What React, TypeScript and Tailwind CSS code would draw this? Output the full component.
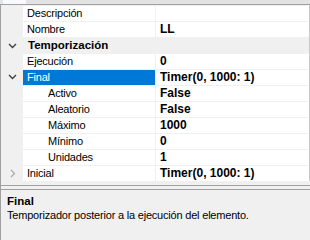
import React from "react";

type Row =
  | { kind: "cat"; name: string; open: boolean }
  | { kind: "prop"; name: string; value: string; indent?: boolean; expander?: "open" | "closed"; selected?: boolean };

const rows: Row[] = [
  { kind: "prop", name: "Descripción", value: "" },
  { kind: "prop", name: "Nombre", value: "LL" },
  { kind: "cat", name: "Temporización", open: true },
  { kind: "prop", name: "Ejecución", value: "0" },
  { kind: "prop", name: "Final", value: "Timer(0, 1000: 1)", expander: "open", selected: true },
  { kind: "prop", name: "Activo", value: "False", indent: true },
  { kind: "prop", name: "Aleatorio", value: "False", indent: true },
  { kind: "prop", name: "Máximo", value: "1000", indent: true },
  { kind: "prop", name: "Mínimo", value: "0", indent: true },
  { kind: "prop", name: "Unidades", value: "1", indent: true },
  { kind: "prop", name: "Inicial", value: "Timer(0, 1000: 1)", expander: "closed" },
];

function ChevronDown() {
  return (
    <svg width="9" height="6" viewBox="0 0 9 6" className="block">
      <path d="M1 1 L4.5 4.5 L8 1" fill="none" stroke="#404040" strokeWidth="1.4" />
    </svg>
  );
}

function ChevronRight() {
  return (
    <svg width="6" height="9" viewBox="0 0 6 9" className="block">
      <path d="M1 1 L4.5 4.5 L1 8" fill="none" stroke="#a8a8a8" strokeWidth="1.2" />
    </svg>
  );
}

export default function App() {
  return (
    <div
      className="w-[310px] h-[240px] bg-[#f0f0f0] flex flex-col overflow-hidden text-[11px] tracking-[-0.2px] text-black"
      style={{ fontFamily: '"Liberation Sans", Arial, sans-serif' }}
    >
      {/* tab strip */}
      <div className="h-[4px] flex bg-[#e3e3e3]">
        <div className="w-[3px]" />
        <div className="w-[23px] bg-[#f7f9fc]" />
      </div>
      <div className="h-[1px] bg-[#a0a0a0]" />

      {/* grid */}
      <div className="flex flex-col border-l border-[#a0a0a0] border-r border-r-[#c8c8c8] bg-white">
        {rows.map((r, i) => {
          if (r.kind === "cat") {
            return (
              <div key={i} className="h-[16px] flex bg-[#f0f0f0] border-t border-[#f0f0f0]">
                <div className="w-[22px] flex items-center justify-center pl-[1px]">
                  <ChevronDown />
                </div>
                <div className="pl-[5px] font-bold text-[11.5px] tracking-normal leading-[15px]">{r.name}</div>
              </div>
            );
          }
          return (
            <div key={i} className="h-[16px] flex">
              <div className="w-[22px] bg-[#f0f0f0] flex items-center justify-center pl-[1px]">
                {r.expander === "open" && <ChevronDown />}
                {r.expander === "closed" && <ChevronRight />}
              </div>
              <div className="flex-1 flex border-t border-[#f0f0f0] mr-[1px]">
                <div
                  className={
                    "w-[132px] leading-[15px] whitespace-nowrap " +
                    (r.indent ? "pl-[25px] " : "pl-[4px] ") +
                    (r.selected ? "bg-[#0078d7] text-white" : "")
                  }
                >
                  {r.name}
                </div>
                <div className="w-[1px] bg-[#f0f0f0]" />
                <div className="flex-1 pl-[4px] font-bold text-[12px] tracking-normal leading-[15px] whitespace-nowrap">
                  {r.value}
                </div>
              </div>
            </div>
          );
        })}
      </div>

      <div className="h-[4px] border-l border-[#a0a0a0]" />
      <div className="h-[1px] bg-[#a0a0a0]" />
      <div className="h-[3px] border-l border-[#a0a0a0]" />
      <div className="h-[1px] bg-[#a0a0a0]" />

      {/* help pane */}
      <div className="flex-1 border-l border-[#a0a0a0] pl-[6px] pt-[4px]">
        <div className="font-bold text-[11.5px] tracking-normal leading-[14px]">Final</div>
        <div className="leading-[15px]">Temporizador posterior a la ejecución del elemento.</div>
      </div>
    </div>
  );
}
